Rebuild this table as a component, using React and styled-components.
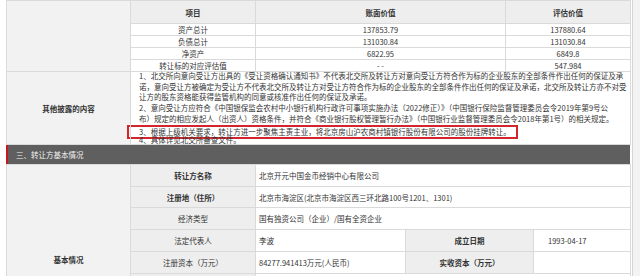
import React from "react";
import styled, { createGlobalStyle } from "styled-components";

const GlobalStyle = createGlobalStyle`
  html, body {
    margin: 0;
    padding: 0;
    background: #fff;
  }
  body {
    font-family: "Noto Sans CJK SC", "Noto Sans", sans-serif;
    font-size: 7.5px;
    color: #333;
    overflow: hidden;
  }
`;

const Page = styled.div`
  display: flex;
  width: 640px;
  height: 276px;
  overflow: hidden;
`;

const Main = styled.div`
  width: 624px;
  margin-left: 6px;
`;

const Rail = styled.div`
  flex: 1;
  margin-left: 2px;
  border-left: 1px solid #d5d5d5;
  background: #f3f3f3;
`;

const Table = styled.table`
  width: 624px;
  table-layout: fixed;
  border-collapse: collapse;
`;

const Cell = styled.td`
  border: 1px solid #dadada;
  height: ${(p) => p.$h || 21}px;
  padding: 0 ${(p) => (p.$pad === undefined ? 3 : p.$pad)}px;
  background: ${(p) => (p.$tone === "side" ? "#f2f2f2" : p.$tone === "label" ? "#eeeeee" : "#fff")};
  font-weight: ${(p) => (p.$bold ? "bold" : "normal")};
  text-align: ${(p) => p.$align || "left"};
  vertical-align: middle;
  line-height: 11px;
  white-space: nowrap;
  overflow: hidden;
`;

const NotesCell = styled.td`
  border: 1px solid #dadada;
  height: 72px;
  padding: 0;
  vertical-align: top;
  background: #fff;
`;

const Notes = styled.div`
  height: 72px;
  margin-top: -1px;
  padding-left: 8px;
  line-height: 10.7px;
`;

const Line = styled.div`
  white-space: nowrap;
`;

const Marked = styled.div`
  width: fit-content;
  white-space: nowrap;
  margin: 0 0 -4px -12px;
  padding: 0 5px 0 10px;
  border: 2px solid #d3262c;
`;

const SectionBar = styled.div`
  position: relative;
  display: flex;
  align-items: center;
  height: 19px;
  padding-left: 8px;
  background: #5f5f5f;
  border-left: 2px solid #c8161d;
  color: #f2f2f2;
`;

const finance = [
  ["资产总计", "137853.79", "137880.64", 11],
  ["负债总计", "131030.84", "131030.84", 11],
  ["净资产", "6822.95", "6849.8", 11],
  ["转让标的对应评估值", "- -", "547.984", 10],
];

const notes = [
  "1、北交所向意向受让方出具的《受让资格确认通知书》不代表北交所及转让方对意向受让方符合作为标的企业股东的全部条件作出任何的保证及承",
  "诺，意向受让方被确定为受让方不代表北交所及转让方对受让方符合作为标的企业股东的全部条件作出任何的保证及承诺，北交所及转让方亦不对受",
  "让方的股东资格能获得监管机构的同意或核准作出任何的保证及承诺。",
  "2、意向受让方应符合《中国银保监会农村中小银行机构行政许可事项实施办法（2022修正）》（中国银行保险监督管理委员会令2019年第9号公",
  "布）规定的相应发起人（出资人）资格条件，并符合《商业银行股权管理暂行办法》（中国银行业监督管理委员会令2018年第1号）的相关规定。",
];

export default function App() {
  return (
    <>
      <GlobalStyle />
      <Page>
        <Main>
          <Table>
            <colgroup>
              <col style={{ width: 124 }} />
              <col style={{ width: 125 }} />
              <col style={{ width: 250 }} />
              <col style={{ width: 125 }} />
            </colgroup>
            <tbody>
              <tr>
                <Cell $tone="side" rowSpan={5} />
                <Cell $tone="label" $bold $align="center" $h={22}>项目</Cell>
                <Cell $tone="label" $bold $align="center" $h={22}>账面价值</Cell>
                <Cell $tone="label" $bold $align="center" $h={22}>评估价值</Cell>
              </tr>
              {finance.map(([name, book, value, h]) => (
                <tr key={name}>
                  <Cell $h={h} $align="center">{name}</Cell>
                  <Cell $h={h} $align="center">{book}</Cell>
                  <Cell $h={h} $align="center">{value}</Cell>
                </tr>
              ))}
              <tr>
                <Cell $tone="side" $bold $align="center" $h={72}>其他披露的内容</Cell>
                <NotesCell colSpan={3}>
                  <Notes>
                    {notes.map((n) => (
                      <Line key={n}>{n}</Line>
                    ))}
                    <Marked>3、根据上级机关要求，转让方进一步聚焦主责主业，将北京房山沪农商村镇银行股份有限公司的股份挂牌转让。</Marked>
                    <Line>4、具体详见北交所备查文件。</Line>
                  </Notes>
                </NotesCell>
              </tr>
            </tbody>
          </Table>

          <SectionBar>三、转让方基本情况</SectionBar>

          <Table>
            <colgroup>
              <col style={{ width: 124 }} />
              <col style={{ width: 125 }} />
              <col style={{ width: 150 }} />
              <col style={{ width: 128 }} />
              <col style={{ width: 97 }} />
            </colgroup>
            <tbody>
              <tr>
                <Cell $tone="side" $bold $align="center" rowSpan={8}>基本情况</Cell>
                <Cell $tone="label" $bold $align="center">转让方名称</Cell>
                <Cell colSpan={3}>北京开元中国金币经销中心有限公司</Cell>
              </tr>
              <tr>
                <Cell $tone="label" $bold $align="center" $h={20}>注册地（住所）</Cell>
                <Cell colSpan={3} $h={20}>北京市海淀区(北京市海淀区西三环北路100号1201、1301)</Cell>
              </tr>
              <tr>
                <Cell $tone="label" $align="center">经济类型</Cell>
                <Cell colSpan={3}>国有独资公司（企业）/国有全资企业</Cell>
              </tr>
              <tr>
                <Cell $tone="label" $align="center">法定代表人</Cell>
                <Cell>李波</Cell>
                <Cell $tone="label" $bold $align="center">成立日期</Cell>
                <Cell $pad={14}>1993-04-17</Cell>
              </tr>
              <tr>
                <Cell $tone="label" $align="center">注册资本（万元）</Cell>
                <Cell>84277.941413万元(人民币)</Cell>
                <Cell $tone="label" $bold $align="center">实收资本（万元）</Cell>
                <Cell $pad={14} />
              </tr>
              <tr>
                <Cell $tone="label" $align="center">企业类型</Cell>
                <Cell colSpan={3} />
              </tr>
              <tr>
                <Cell $tone="label" $align="center">所属行业</Cell>
                <Cell colSpan={3} />
              </tr>
              <tr>
                <Cell $tone="label" $align="center" $h={36}>经营范围</Cell>
                <Cell colSpan={3} $h={36} />
              </tr>
            </tbody>
          </Table>
        </Main>
        <Rail />
      </Page>
    </>
  );
}
